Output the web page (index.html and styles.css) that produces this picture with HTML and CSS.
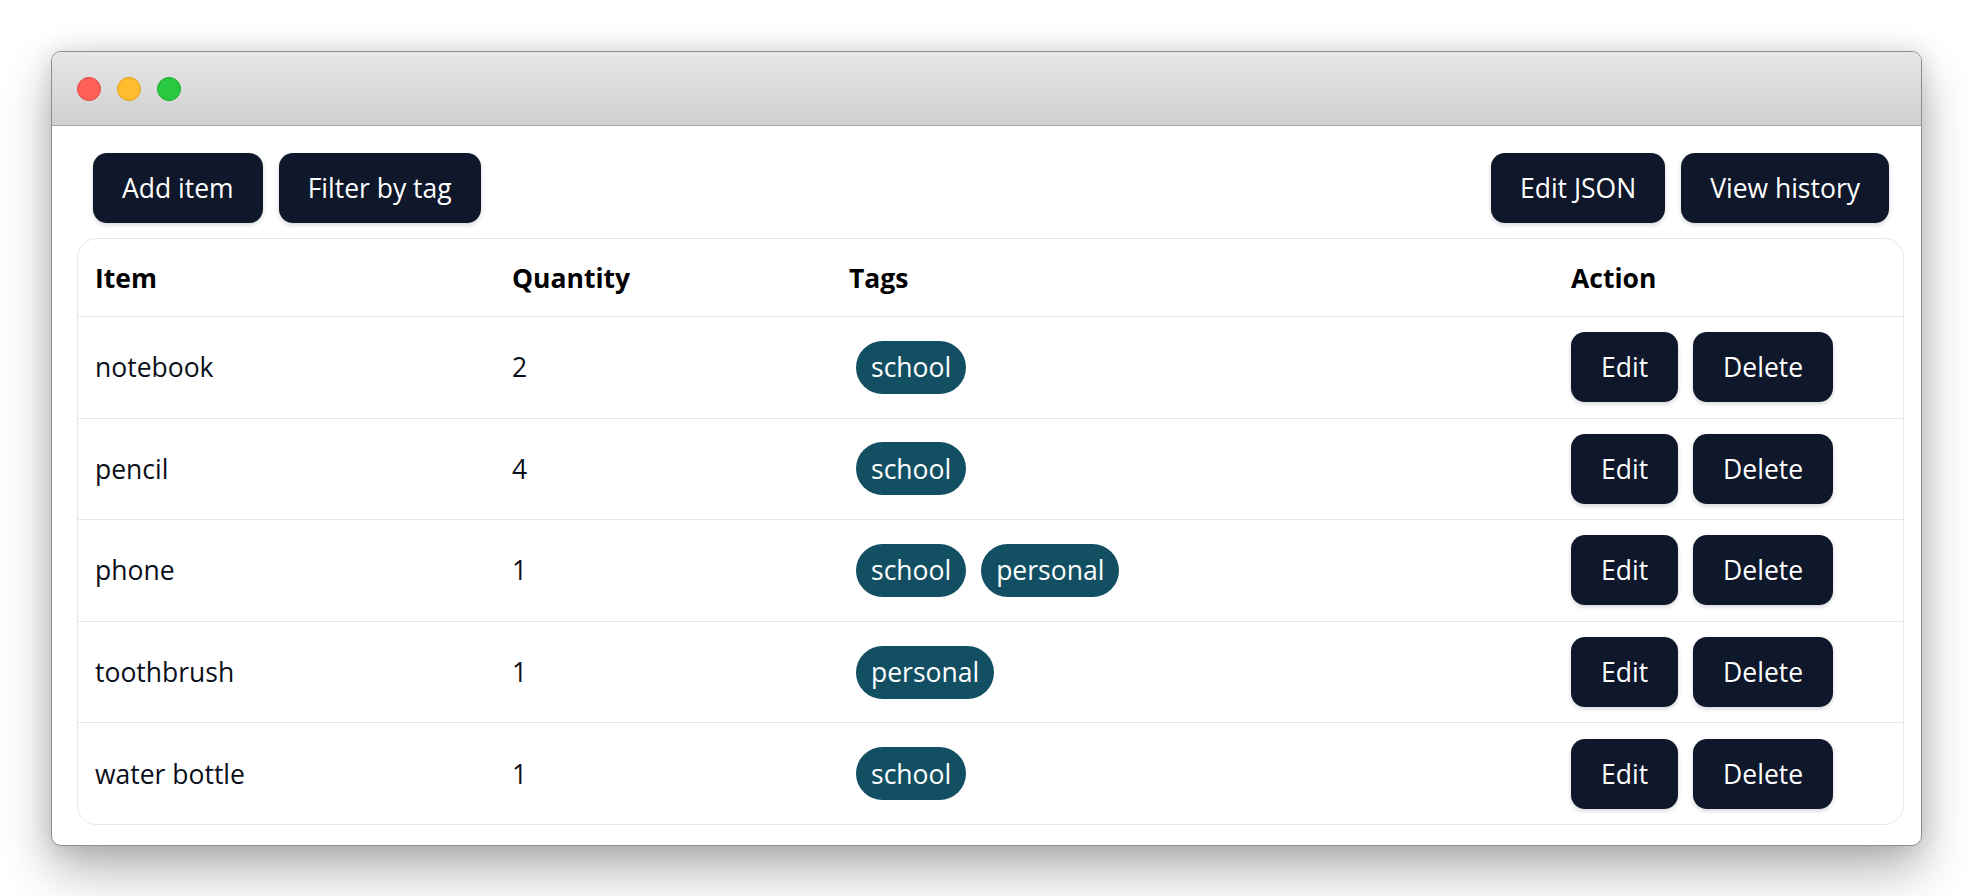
FILE: index.html
```html
<!DOCTYPE html>
<html lang="en">
<head>
<meta charset="utf-8">
<title>Inventory</title>
<link rel="stylesheet" href="styles.css">
</head>
<body>
<div class="window">
  <div class="titlebar">
    <span class="dot dot-red"></span>
    <span class="dot dot-yellow"></span>
    <span class="dot dot-green"></span>
  </div>
  <div class="content">
    <div class="toolbar">
      <div class="group">
        <button class="btn">Add item</button>
        <button class="btn">Filter by tag</button>
      </div>
      <div class="group">
        <button class="btn">Edit JSON</button>
        <button class="btn">View history</button>
      </div>
    </div>
    <div class="card">
      <div class="row head">
        <div class="cell">Item</div>
        <div class="cell">Quantity</div>
        <div class="cell">Tags</div>
        <div class="cell">Action</div>
      </div>
      <div class="row">
        <div class="cell">notebook</div>
        <div class="cell">2</div>
        <div class="cell tags"><span class="tag">school</span></div>
        <div class="cell actions"><button class="btn">Edit</button><button class="btn">Delete</button></div>
      </div>
      <div class="row">
        <div class="cell">pencil</div>
        <div class="cell">4</div>
        <div class="cell tags"><span class="tag">school</span></div>
        <div class="cell actions"><button class="btn">Edit</button><button class="btn">Delete</button></div>
      </div>
      <div class="row">
        <div class="cell">phone</div>
        <div class="cell">1</div>
        <div class="cell tags"><span class="tag">school</span><span class="tag">personal</span></div>
        <div class="cell actions"><button class="btn">Edit</button><button class="btn">Delete</button></div>
      </div>
      <div class="row">
        <div class="cell">toothbrush</div>
        <div class="cell">1</div>
        <div class="cell tags"><span class="tag">personal</span></div>
        <div class="cell actions"><button class="btn">Edit</button><button class="btn">Delete</button></div>
      </div>
      <div class="row">
        <div class="cell">water bottle</div>
        <div class="cell">1</div>
        <div class="cell tags"><span class="tag">school</span></div>
        <div class="cell actions"><button class="btn">Edit</button><button class="btn">Delete</button></div>
      </div>
    </div>
  </div>
</div>
</body>
</html>
```

FILE: styles.css
```css
* {
  box-sizing: border-box;
}

html, body {
  margin: 0;
  background: #ffffff;
}

body {
  min-height: 100vh;
  padding: 51px 50px 51px 51px;
  font-family: "Segoe UI", "Open Sans", "Noto Sans", sans-serif;
  font-size: 26.5px;
  line-height: 38px;
  color: #0b0f1a;
}

.window {
  border: 1px solid #8e8e8e;
  border-radius: 10px;
  background: #ffffff;
  overflow: hidden;
  box-shadow: 0 24px 50px rgba(0, 0, 0, 0.3), 0 0 24px rgba(0, 0, 0, 0.13);
}

.titlebar {
  height: 74px;
  display: flex;
  align-items: center;
  gap: 16px;
  padding-left: 25px;
  background: linear-gradient(#e7e7e7, #cfcfcf);
  border-bottom: 1px solid #a6a6a6;
}

.dot {
  width: 24px;
  height: 24px;
  border-radius: 50%;
}

.dot-red {
  background: #ff5f57;
  border: 1px solid #e2463f;
}

.dot-yellow {
  background: #febc2e;
  border: 1px solid #e1a116;
}

.dot-green {
  background: #28c840;
  border: 1px solid #1aab29;
}

.content {
  padding: 27px 17px 20px 25px;
}

.toolbar {
  display: flex;
  justify-content: space-between;
  padding: 0 15px 0 16px;
  margin-bottom: 15px;
}

.group {
  display: flex;
  gap: 16px;
}

.btn {
  height: 70px;
  padding: 0 29px;
  border: none;
  border-radius: 14px;
  background: #0f172a;
  color: #ffffff;
  font-family: inherit;
  font-size: 26.5px;
  line-height: 38px;
  box-shadow: 0 2px 4px rgba(15, 23, 42, 0.18);
  cursor: pointer;
}

.card {
  border: 1px solid #e2e8f0;
  border-radius: 20px;
  overflow: hidden;
}

.row {
  display: grid;
  grid-template-columns: 417px 337px 722px 1fr;
  align-items: center;
  height: 101.6px;
  border-top: 1px solid #e2e8f0;
}

.row.head {
  height: 77px;
  border-top: none;
  font-weight: 700;
  color: #000000;
}

.cell {
  padding-left: 17px;
  white-space: nowrap;
}

.tags {
  display: flex;
  gap: 15px;
  padding-left: 24px;
}

.tag {
  display: inline-flex;
  align-items: center;
  height: 53px;
  padding: 0 15px;
  border-radius: 27px;
  background: #134f63;
  color: #ffffff;
}

.actions {
  display: flex;
  gap: 15px;
}

.actions .btn {
  padding: 0 30px;
}
```
